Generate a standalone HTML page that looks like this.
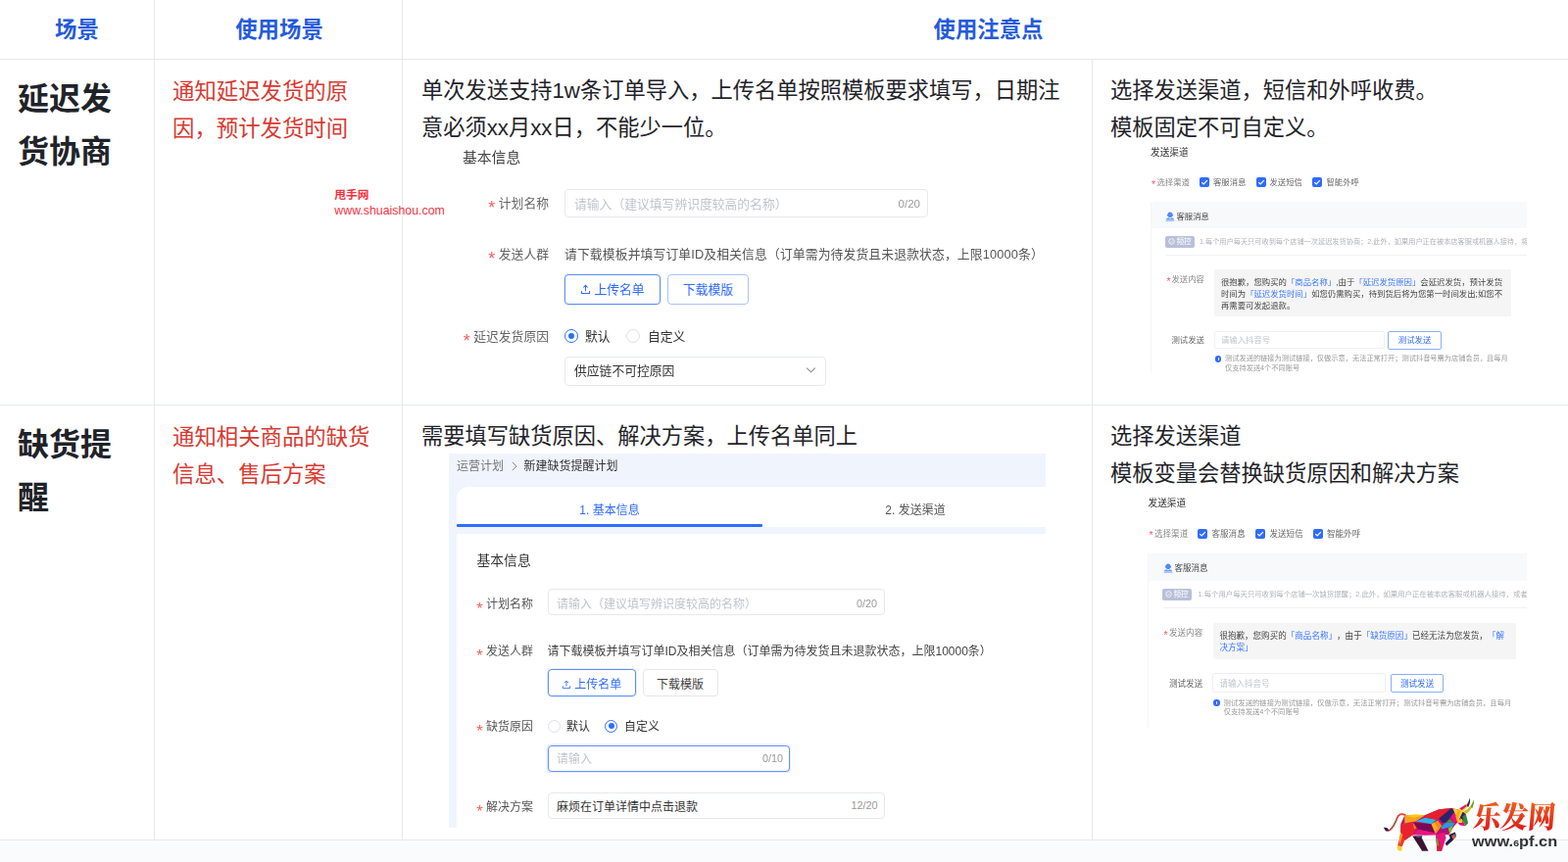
<!DOCTYPE html>
<html lang="zh-CN">
<head>
<meta charset="utf-8">
<title>场景 使用场景 使用注意点</title>
<style>
*{box-sizing:border-box;margin:0;padding:0}
html,body{width:1600px;height:880px;overflow:hidden;background:#fff}
body{position:relative;text-spacing-trim:space-all;font-family:"Liberation Sans","Noto Sans CJK SC",sans-serif;color:#222}
.a{position:absolute;white-space:nowrap}
.hl{position:absolute;left:0;width:1600px;height:1px;background:#e7e8ec}
.vl{position:absolute;width:1px;background:#e7e8ec}
.th{color:#245bdb;font-weight:700;font-size:22.4px;line-height:30px;text-align:center}
.t1{font-weight:700;font-size:32px;line-height:54px;color:#1f2329}
.t2{font-size:22.4px;line-height:38px;color:#d83931}
.t3{font-size:22.25px;line-height:38px;color:#1f2329}
/* embedded form (left images) */
.f{font-size:12.8px;line-height:18px;color:#555;filter:blur(.3px)}
.f .lb{color:#666}
.st{color:#f5605c;font-size:1.4em;line-height:0;vertical-align:-0.36em}
.inp{position:absolute;border:1px solid #e6e8ed;border-radius:4px;background:#fff}
.ph{color:#c2c4cc}
.cnt{color:#999;font-size:11.5px}
.btn{position:absolute;border:1px solid #6b9bfa;border-radius:4px;background:#fff;color:#2f6bff;text-align:center}
.rd{position:absolute;width:14px;height:14px;border-radius:50%;border:1px solid #dcdfe6;background:#fff}
.rd.on{border-color:#2f6bff}
.rd.on::after{content:"";position:absolute;left:3px;top:3px;width:6px;height:6px;border-radius:50%;background:#2f6bff}
.g{font-size:12px;line-height:18px;color:#555;filter:blur(.3px)}
.g .lb{color:#555}
.g .a{margin-top:1px}
.g .a.cnt{margin-top:-.5px}
.g .cnt{font-size:10.8px}
.g .rd.on::after{left:2.5px;top:2.5px}
/* embedded small images (right) */
.s{font-size:8.4px;line-height:12px;color:#666;filter:blur(.35px)}
.s .st{font-size:1.25em;vertical-align:-0.22em}
.cb{position:absolute;width:10px;height:10px;border-radius:2px;background:#2f6bff}
.bl{color:#3b78ff}
</style>
</head>
<body>
<!-- grid lines -->
<div class="hl" style="top:60px"></div>
<div class="hl" style="top:413px"></div>
<div class="hl" style="top:857px"></div>
<div class="vl" style="left:157px;top:0;height:858px"></div>
<div class="vl" style="left:410px;top:0;height:858px"></div>
<div class="vl" style="left:1114px;top:60px;height:798px"></div>
<div class="a" style="left:0;top:858px;width:1600px;height:22px;background:#fafbfd"></div>

<!-- header -->
<div class="a th" style="left:0;top:16px;width:157px">场景</div>
<div class="a th" style="left:159px;top:16px;width:252px">使用场景</div>
<div class="a th" style="left:411.5px;top:16px;width:1194px">使用注意点</div>

<!-- row 1 -->
<div class="a t1" style="left:18px;top:74px">延迟发<br>货协商</div>
<div class="a t2" style="left:176px;top:75px">通知延迟发货的原<br>因，预计发货时间</div>
<div class="a t3" style="left:430px;top:74px">单次发送支持1w条订单导入，上传名单按照模板要求填写，日期注<br>意必须xx月xx日，不能少一位。</div>
<div class="a t3" style="left:1133px;top:74px">选择发送渠道，短信和外呼收费。<br>模板固定不可自定义。</div>


<!-- watermark -->
<div class="a" style="left:341.300px;top:190.800px;font-size:11.750px;line-height:16px;font-weight:700;color:#f5333f">甩手网</div>
<div class="a" style="left:341.300px;top:207.300px;font-size:12.350px;line-height:16px;color:#f5333f">www.shuaishou.com</div>

<!-- form 1 -->
<div class="f">
<div class="a" style="left:472px;top:151px;font-size:14.8px;line-height:20px;color:#444">基本信息</div>

<div class="a lb" style="left:440px;width:120px;top:199px;text-align:right"><span class="st">*</span> 计划名称</div>
<div class="inp" style="left:576px;top:193px;width:370.5px;height:28.7px"></div>
<div class="a ph" style="left:586px;top:200px">请输入（建议填写辨识度较高的名称）</div>
<div class="a cnt" style="left:880px;width:59px;top:199px;text-align:right">0/20</div>

<div class="a lb" style="left:440px;width:120px;top:251px;text-align:right"><span class="st">*</span> 发送人群</div>
<div class="a" style="left:576px;top:251px;letter-spacing:.13px">请下载模板并填写订单ID及相关信息（订单需为待发货且未退款状态，上限10000条）</div>
<div class="btn" style="left:576px;top:280px;width:98px;height:30.5px;line-height:30.5px;border-color:#5b8ff9;box-shadow:0 0 0 1px rgba(47,107,255,.12)"><svg width="11" height="11" viewBox="0 0 12 12" style="vertical-align:-1px;margin-right:3px"><path d="M6 8V1.6M3.6 3.8 6 1.4l2.4 2.4M1.6 7.6v2.8h8.8V7.6" fill="none" stroke="#2f6bff" stroke-width="1.1"/></svg>上传名单</div>
<div class="btn" style="left:681px;top:280px;width:82.800px;height:30.5px;line-height:30.5px;border-color:#a9c4fc">下载模版</div>

<div class="a lb" style="left:420px;width:140px;top:335px;text-align:right"><span class="st">*</span> 延迟发货原因</div>
<div class="rd on" style="left:576px;top:336px"></div>
<div class="a" style="left:597px;top:335px;color:#333">默认</div>
<div class="rd" style="left:639px;top:336px"></div>
<div class="a" style="left:661px;top:335px;color:#333">自定义</div>
<div class="inp" style="left:576px;top:364px;width:267px;height:29.700px"></div>
<div class="a" style="left:586px;top:370px;color:#333">供应链不可控原因</div>
<svg class="a" style="left:822px;top:374px" width="11" height="8" viewBox="0 0 11 8"><path d="M1.2 1.6 5.5 5.8 9.8 1.6" fill="none" stroke="#8a8d96" stroke-width="1.1"/></svg>
</div>

<!-- row 2 -->
<div class="a t1" style="left:18px;top:427px">缺货提<br>醒</div>
<div class="a t2" style="left:176px;top:428px">通知相关商品的缺货<br>信息、售后方案</div>
<div class="a t3" style="left:430px;top:427px">需要填写缺货原因、解决方案，上传名单同上</div>
<div class="a t3" style="left:1133px;top:427px;line-height:38px">选择发送渠道<br>模板变量会替换缺货原因和解决方案</div>


<!-- form 2 -->
<div class="a" style="left:458px;top:463px;width:608.5px;height:382px;background:#f0f4fd;overflow:hidden">
 <div class="a" style="left:8px;top:33.5px;width:624px;height:41.5px;background:#fff;border-radius:12px 12px 0 0"></div>
 <div class="a" style="left:8px;top:71.5px;width:312px;height:3.5px;background:#2f6bff;border-radius:1px"></div>
 <div class="a" style="left:8px;top:82px;width:624px;height:300px;background:#fff"></div>
</div>
<div class="g">
<div class="a" style="left:466px;top:466px;color:#777">运营计划</div>
<svg class="a" style="left:521px;top:469px" width="8" height="12" viewBox="0 0 8 12"><path d="M1.8 1.8 6 6 1.8 10.2" fill="none" stroke="#888" stroke-width="1"/></svg>
<div class="a" style="left:534.5px;top:466px;color:#333">新建缺货提醒计划</div>
<div class="a" style="left:466px;width:312px;top:511px;text-align:center;color:#2f6bff">1. 基本信息</div>
<div class="a" style="left:778px;width:312px;top:511px;text-align:center;color:#555">2. 发送渠道</div>
<div class="a" style="left:486.5px;top:562px;font-size:13.8px;line-height:20px;color:#333">基本信息</div>

<div class="a lb" style="left:444px;width:100px;top:607px;text-align:right"><span class="st">*</span> 计划名称</div>
<div class="inp" style="left:558.5px;top:601px;width:344px;height:26.5px"></div>
<div class="a ph" style="left:568px;top:607px">请输入（建议填写辨识度较高的名称）</div>
<div class="a cnt" style="left:835px;width:60px;top:607px;text-align:right">0/20</div>

<div class="a lb" style="left:444px;width:100px;top:654.5px;text-align:right"><span class="st">*</span> 发送人群</div>
<div class="a" style="left:558.5px;top:654.5px;color:#444">请下载模板并填写订单ID及相关信息（订单需为待发货且未退款状态，上限10000条）</div>
<div class="btn" style="left:558.5px;top:683px;width:90.5px;height:27.5px;line-height:30px;border-color:#5b8ff9;box-shadow:0 0 0 1px rgba(47,107,255,.12)"><svg width="10" height="10" viewBox="0 0 12 12" style="vertical-align:-1px;margin-right:3px"><path d="M6 8V1.6M3.6 3.8 6 1.4l2.4 2.4M1.6 7.6v2.8h8.8V7.6" fill="none" stroke="#2f6bff" stroke-width="1.1"/></svg>上传名单</div>
<div class="btn" style="left:655.5px;top:683px;width:77px;height:27.5px;line-height:30px;border-color:#e4e6ea;color:#444">下载模版</div>

<div class="a lb" style="left:444px;width:100px;top:732px;text-align:right"><span class="st">*</span> 缺货原因</div>
<div class="rd" style="left:558.5px;top:734.5px;width:13px;height:13px"></div>
<div class="a" style="left:578px;top:732px;color:#333">默认</div>
<div class="rd on" style="left:617px;top:734.5px;width:13px;height:13px"></div>
<div class="a" style="left:637px;top:732px;color:#333">自定义</div>
<div class="inp" style="left:558.5px;top:760.5px;width:247px;height:27px;border-color:#6494f8;box-shadow:0 0 0 1.5px rgba(47,107,255,.14)"></div>
<div class="a ph" style="left:568px;top:765px">请输入</div>
<div class="a cnt" style="left:740px;width:59px;top:765px;text-align:right">0/10</div>

<div class="a lb" style="left:444px;width:100px;top:814px;text-align:right"><span class="st">*</span> 解决方案</div>
<div class="inp" style="left:558.5px;top:809px;width:344px;height:26.5px"></div>
<div class="a" style="left:568px;top:813.5px;color:#333">麻烦在订单详情中点击退款</div>
<div class="a cnt" style="left:835px;width:60.5px;top:813.5px;text-align:right">12/20</div>
</div>


<!-- right image 1 -->
<div class="s">
<div class="a" style="left:1174px;top:148.5px;font-size:9.7px;line-height:14px;color:#333">发送渠道</div>
<div class="a" style="left:1175px;top:180.5px;color:#888"><span class="st">*</span></div>
<div class="a" style="left:1180.5px;top:180px;color:#888">选择渠道</div>
<div class="cb" style="left:1224px;top:181px"><svg width="10" height="10" viewBox="0 0 10 10" style="position:absolute;left:0;top:0"><path d="M2.3 5.1 4.2 7 7.8 3.2" fill="none" stroke="#fff" stroke-width="1.2"/></svg></div><div class="a" style="left:1238px;top:180px">客服消息</div>
<div class="cb" style="left:1281.5px;top:181px"><svg width="10" height="10" viewBox="0 0 10 10" style="position:absolute;left:0;top:0"><path d="M2.3 5.1 4.2 7 7.8 3.2" fill="none" stroke="#fff" stroke-width="1.2"/></svg></div><div class="a" style="left:1295.5px;top:180px">发送短信</div>
<div class="cb" style="left:1339px;top:181px"><svg width="10" height="10" viewBox="0 0 10 10" style="position:absolute;left:0;top:0"><path d="M2.3 5.1 4.2 7 7.8 3.2" fill="none" stroke="#fff" stroke-width="1.2"/></svg></div><div class="a" style="left:1353.5px;top:180px">智能外呼</div>

<div class="a" style="left:1173.5px;top:206px;width:384px;height:175px;border-left:1px solid #f4f5f8;overflow:hidden">
 <div class="a" style="left:-1px;top:0;width:400px;height:27.4px;background:#f8f9fb;border-radius:5px 0 0 0"></div>
 <div class="a" style="left:15px;top:54px;width:380px;height:1px;background:#f0f1f4"></div>
 <div class="a" style="left:64.5px;top:69px;width:302.800px;height:47.5px;background:#f5f5f6;border-radius:2px"></div>
 <div class="a" style="left:49.5px;top:34.7px;width:380px;color:#b0b2b8;font-size:7.2px">1.每个用户每天只可收到每个店铺一次延迟发货协商；2.此外，如果用户正在被本店客服或机器人接待，将无法</div>
</div>
<svg class="a" style="left:1189px;top:215.5px" width="10" height="10" viewBox="0 0 10 10"><path d="M5 .5c1.500 0 2.500 1 2.600 2.400h.5v1.500h-.8C6.900 5.400 6 6 5 6S3.100 5.400 2.700 4.400h-.8V2.900h.5C2.500 1.500 3.500.5 5 .5z" fill="#4c8bff"/><path d="M.7 8.400C1 6.900 2.500 6.300 3.400 6.200L5 7.300l1.600-1.100c.9.100 2.400.7 2.700 2.200z" fill="#6aa0ff"/><rect x=".7" y="8.900" width="8.600" height=".9" fill="#8cb6ff"/></svg>
<div class="a" style="left:1200.5px;top:214.5px;color:#444">客服消息</div>
<div class="a" style="left:1189px;top:240.5px;width:30px;height:12px;border-radius:2px;background:#b9bfd9;color:#fff;font-size:7.6px;line-height:12px;text-align:center"><svg width="7" height="7" viewBox="0 0 8 8" style="vertical-align:-1px;margin-right:1px"><circle cx="4" cy="4" r="3.2" fill="none" stroke="#fff" stroke-width=".9"/><path d="M2.6 4.1l1 1 1.800-2" fill="none" stroke="#fff" stroke-width=".8"/></svg>频控</div>

<div class="a" style="left:1190.5px;top:279.500px;color:#888"><span class="st">*</span></div>
<div class="a" style="left:1195.5px;top:279px;color:#888">发送内容</div>
<div class="a" style="left:1246px;top:281.500px;color:#444">很抱歉，您购买的<span class="bl">「商品名称」</span>,由于<span class="bl">「延迟发货原因」</span>会延迟发货，预计发货<br>时间为<span class="bl">「延迟发货时间」</span>如您仍需购买，待到货后将为您第一时间发出;如您不<br>再需要可发起退款。</div>

<div class="a" style="left:1195.5px;top:341px;color:#666">测试发送</div>
<div class="inp" style="left:1239px;top:337.800px;width:173.5px;height:18.700px;border-radius:2px;border-color:#eff0f3"></div>
<div class="a ph" style="left:1246px;top:341px">请输入抖音号</div>
<div class="btn" style="left:1416.300px;top:337.500px;width:54.5px;height:19px;line-height:17.5px;border-radius:2px;border-color:#8aaefa">测试发送</div>
<div class="a" style="left:1239.700px;top:363.100px;width:6.600px;height:6.600px;border-radius:50%;background:#2f6bff"><i style="position:absolute;left:2.900px;top:1.500px;width:.8px;height:.8px;background:#dbe6ff"></i><i style="position:absolute;left:2.900px;top:2.900px;width:.8px;height:2.200px;background:#dbe6ff"></i></div>
<div class="a" style="left:1250px;top:361.200px;font-size:7.230px;line-height:9.600px;color:#999">测试发送的链接为测试链接，仅做示意，无法正常打开；测试抖音号需为店铺会员，且每月<br>仅支持发送4个不同账号</div>
</div>

<!-- right image 2 -->
<div class="s" style="font-size:8.550px">
<div class="a" style="left:1171.5px;top:506.5px;font-size:9.7px;line-height:14px;color:#333">发送渠道</div>
<div class="a" style="left:1172.5px;top:539.3px;color:#888"><span class="st">*</span></div>
<div class="a" style="left:1178px;top:538.800px;color:#888">选择渠道</div>
<div class="cb" style="left:1222px;top:539.800px"><svg width="10" height="10" viewBox="0 0 10 10" style="position:absolute;left:0;top:0"><path d="M2.3 5.1 4.2 7 7.8 3.2" fill="none" stroke="#fff" stroke-width="1.2"/></svg></div><div class="a" style="left:1236.5px;top:538.800px">客服消息</div>
<div class="cb" style="left:1280.700px;top:539.800px"><svg width="10" height="10" viewBox="0 0 10 10" style="position:absolute;left:0;top:0"><path d="M2.3 5.1 4.2 7 7.8 3.2" fill="none" stroke="#fff" stroke-width="1.2"/></svg></div><div class="a" style="left:1295.5px;top:538.800px">发送短信</div>
<div class="cb" style="left:1339.5px;top:539.800px"><svg width="10" height="10" viewBox="0 0 10 10" style="position:absolute;left:0;top:0"><path d="M2.3 5.1 4.2 7 7.8 3.2" fill="none" stroke="#fff" stroke-width="1.2"/></svg></div><div class="a" style="left:1354px;top:538.800px">智能外呼</div>

<div class="a" style="left:1171px;top:565px;width:386.500px;height:178px;border-left:1px solid #f4f5f8;overflow:hidden">
 <div class="a" style="left:-1px;top:0;width:400px;height:27.6px;background:#f8f9fb;border-radius:5px 0 0 0"></div>
 <div class="a" style="left:15px;top:55px;width:380px;height:1px;background:#f0f1f4"></div>
 <div class="a" style="left:66.300px;top:70.700px;width:309px;height:37.5px;background:#f5f5f6;border-radius:2px"></div>
 <div class="a" style="left:50.600px;top:35.800px;width:380px;color:#b0b2b8;font-size:7.36px">1.每个用户每天只可收到每个店铺一次缺货提醒；2.此外，如果用户正在被本店客服或机器人接待，或者用</div>
</div>
<svg class="a" style="left:1186.5px;top:575px" width="10" height="10" viewBox="0 0 10 10"><path d="M5 .5c1.500 0 2.500 1 2.600 2.400h.5v1.500h-.8C6.900 5.400 6 6 5 6S3.100 5.400 2.700 4.400h-.8V2.900h.5C2.500 1.500 3.500.5 5 .5z" fill="#4c8bff"/><path d="M.7 8.400C1 6.900 2.500 6.300 3.400 6.200L5 7.300l1.600-1.100c.9.100 2.400.7 2.700 2.200z" fill="#6aa0ff"/><rect x=".7" y="8.900" width="8.600" height=".9" fill="#8cb6ff"/></svg>
<div class="a" style="left:1198.400px;top:574.300px;color:#444">客服消息</div>
<div class="a" style="left:1186px;top:600.800px;width:30px;height:12px;border-radius:2px;background:#b9bfd9;color:#fff;font-size:7.6px;line-height:12px;text-align:center"><svg width="7" height="7" viewBox="0 0 8 8" style="vertical-align:-1px;margin-right:1px"><circle cx="4" cy="4" r="3.2" fill="none" stroke="#fff" stroke-width=".9"/><path d="M2.6 4.1l1 1 1.800-2" fill="none" stroke="#fff" stroke-width=".8"/></svg>频控</div>

<div class="a" style="left:1187.5px;top:640.5px;color:#888"><span class="st">*</span></div>
<div class="a" style="left:1193px;top:640px;color:#888">发送内容</div>
<div class="a" style="left:1244.400px;top:643px;line-height:12.300px;color:#444">很抱歉，您购买的<span class="bl">「商品名称」</span>，由于<span class="bl">「缺货原因」</span>已经无法为您发货，<span class="bl">「解<br>决方案」</span></div>

<div class="a" style="left:1193px;top:692px;color:#666">测试发送</div>
<div class="inp" style="left:1237.300px;top:687.400px;width:176.800px;height:19.800px;border-radius:2px;border-color:#eff0f3"></div>
<div class="a ph" style="left:1244.400px;top:692px">请输入抖音号</div>
<div class="btn" style="left:1419px;top:687.600px;width:54.200px;height:19.600px;line-height:18.5px;border-radius:2px;border-color:#8aaefa">测试发送</div>
<div class="a" style="left:1238.200px;top:714px;width:6.600px;height:6.600px;border-radius:50%;background:#2f6bff"><i style="position:absolute;left:2.900px;top:1.500px;width:.8px;height:.8px;background:#dbe6ff"></i><i style="position:absolute;left:2.900px;top:2.900px;width:.8px;height:2.200px;background:#dbe6ff"></i></div>
<div class="a" style="left:1248.600px;top:712.5px;font-size:7.350px;line-height:9.300px;color:#999">测试发送的链接为测试链接，仅做示意，无法正常打开；测试抖音号需为店铺会员，且每月<br>仅支持发送4个不同账号</div>
</div>


<!-- logo -->
<svg class="a" style="left:1400px;top:800px" width="200" height="80" viewBox="0 0 1600 640">
 <!-- bull -->
 <path d="M271 256 C243 241 215 249 204 283 C192 317 175 351 147 379 C136 387 119 384 108 368" fill="none" stroke="#e2403a" stroke-width="14" stroke-linecap="round"/>
 <path d="M201 294 C192 317 184 334 172 351" fill="none" stroke="#6a8a3a" stroke-width="9" stroke-linecap="round"/>
 <path d="M94 355 L125 362 L141 384 L113 387 Z" fill="#1b2350"/>
 <polygon points="235,328 266,260 435,256 547,209 649,200 705,211 697,317 671,345 626,418 519,418 333,418 266,463 232,418" fill="#c4146a"/>
 <polygon points="266,262 435,257 356,307 266,324" fill="#f6a21e"/>
 <polygon points="266,262 356,249 435,257 344,277" fill="#f9c81c"/>
 <polygon points="250,328 288,321 266,365" fill="#8a8f2c"/>
 <polygon points="235,334 333,317 364,362 333,418 266,463 232,418" fill="#e8232d"/>
 <polygon points="333,317 364,362 344,373" fill="#f57a1f"/>
 <polygon points="356,307 435,277 526,294 485,329" fill="#2bb5ea"/>
 <polygon points="339,317 485,329 509,401 378,373" fill="#7a0a55"/>
 <polygon points="333,418 378,373 509,401 519,418 435,421" fill="#e8157f"/>
 <polygon points="485,329 537,300 571,345 520,413" fill="#f58a1f"/>
 <polygon points="485,329 508,317 536,362 516,396" fill="#f9b21c"/>
 <polygon points="435,257 547,209 649,200 547,284 526,294 435,277" fill="#e61f2d"/>
 <polygon points="547,284 649,200 678,228 604,318 571,318" fill="#2a2468"/>
 <polygon points="649,262 678,228 697,306 660,318" fill="#e5127d"/>
 <polygon points="604,318 638,289 660,318" fill="#3f9e3a"/>
 <polygon points="571,345 604,318 677,322 660,346 564,374" fill="#1ea0e0"/>
 <polygon points="621,362 660,346 639,418" fill="#7cc23a"/>
 <polygon points="520,413 571,345 564,374 621,362 627,418 593,397" fill="#b01078"/>
 <polygon points="232,418 266,463 246,514 209,508" fill="#ee3a2a"/>
 <polygon points="209,508 246,514 243,549 215,546 205,525" fill="#f7d21c"/>
 <polygon points="235,396 250,418 226,497 222,441" fill="#f59a1f"/>
 <polygon points="329,425 406,441 460,549 409,549" fill="#3a1530"/>
 <polygon points="329,425 412,425 406,441" fill="#1f2a5a"/>
 <polygon points="519,418 593,397 604,441 570,549 531,549" fill="#e8157f"/>
 <polygon points="531,475 550,469 567,549 531,549" fill="#d11f2a"/>
 <polygon points="519,441 536,452 547,508 531,508" fill="#7a9a2c"/>
 <polygon points="627,418 678,396 688,424 660,463 609,508 597,487 638,446" fill="#1c1a4e"/>
 <polygon points="649,424 678,413 683,441 660,452" fill="#f0562a"/>
 <polygon points="666,410 688,418 683,441" fill="#1a8f7a"/>
 <polygon points="660,204 705,211 742,228 697,317 688,266" fill="#f9d21c"/>
 <polygon points="705,211 725,215 694,306 683,266" fill="#f6a81e"/>
 <polygon points="742,228 767,249 745,306 717,277" fill="#3a1d5e"/>
 <polygon points="697,317 717,277 745,306 762,345 717,339" fill="#e5127d"/>
 <polygon points="739,266 767,249 785,322 763,346 745,306" fill="#2e8a3a"/>
 <polygon points="697,294 736,289 739,317 700,322" fill="#f7c51c"/>
 <path d="M711 207 C750 193 784 165 798 115 C801 165 773 210 736 225Z" fill="#f4d21f"/>
 <path d="M773 176 C787 153 794 136 798 115 C806 142 798 170 784 193Z" fill="#222a5c"/>
 <path d="M745 228 C784 210 818 176 828 130 C836 176 807 221 764 249Z" fill="#c9c22a"/>
 <path d="M807 187 C818 170 825 153 828 130 C835 159 828 181 817 201Z" fill="#6a9a2e"/>
 <path d="M714 201 L767 170 L773 184 L733 215 Z" fill="#e5127d"/>
</svg>
<div class="a" style="left:1502.400px;top:818.5px;font-family:'Liberation Serif','Noto Serif CJK SC',serif;font-weight:900;font-size:28.250px;line-height:34px;letter-spacing:-.25px;color:#e5341c;background:linear-gradient(#f0641e,#d9101c);-webkit-background-clip:text;background-clip:text;-webkit-text-fill-color:transparent;transform:skewX(-5deg) scaleY(1.09);transform-origin:0 28px">乐发网</div>
<div class="a" style="left:1502px;top:849px;font-size:14px;line-height:20px;font-weight:700;color:#333;transform:scaleX(1.17);transform-origin:0 0">www.<span style="font-size:9px">6</span>pf.cn</div>

</body>
</html>
